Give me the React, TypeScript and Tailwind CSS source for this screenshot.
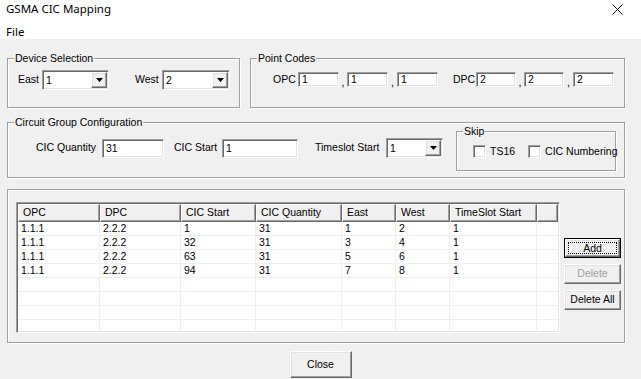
import React from "react";

const sunken =
  "border border-t-[#a0a0a0] border-l-[#a0a0a0] border-b-white border-r-white shadow-[inset_1px_1px_0_#696969,inset_-1px_-1px_0_#e3e3e3] bg-white";
const raised =
  "border border-t-white border-l-white border-b-[#696969] border-r-[#696969] shadow-[inset_-1px_-1px_0_#a0a0a0,inset_1px_1px_0_#e3e3e3] bg-[#f0f0f0]";
const headerCell =
  "border border-t-white border-l-white border-r-[#696969] border-b-[#696969] shadow-[inset_-1px_-1px_0_#a0a0a0] bg-[#f0f0f0]";

function Group({
  label,
  className,
  children,
}: {
  label?: string;
  className?: string;
  children?: React.ReactNode;
}) {
  return (
    <div
      className={`relative border border-[#a0a0a0] shadow-[inset_1px_1px_0_#fff,1px_1px_0_#fff] ${className ?? ""}`}
    >
      {label && (
        <span className="absolute -top-[7px] left-[6px] bg-[#f0f0f0] px-[1px] leading-[13px] whitespace-nowrap">
          {label}
        </span>
      )}
      {children}
    </div>
  );
}

function Arrow() {
  return (
    <svg width="7" height="4" viewBox="0 0 7 4">
      <polygon points="0,0 7,0 3.5,4" fill="#000" />
    </svg>
  );
}

function Combo({ value, className }: { value: string; className: string }) {
  return (
    <div className={`flex h-[20px] shrink-0 p-[1px] ${sunken} ${className}`}>
      <span className="flex-1 pl-[2px] leading-[16px]">{value}</span>
      <span className={`flex w-[16px] items-center justify-center ${raised}`}>
        <Arrow />
      </span>
    </div>
  );
}

function Field({ value, className }: { value: string; className: string }) {
  return (
    <div className={`shrink-0 pl-[3px] ${sunken} ${className}`}>{value}</div>
  );
}

function Check({ label, className }: { label: string; className?: string }) {
  return (
    <div className={`flex items-center whitespace-nowrap ${className ?? ""}`}>
      <span className={`h-[13px] w-[13px] shrink-0 ${sunken}`} />
      <span className="ml-[4px] leading-[13px]">{label}</span>
    </div>
  );
}

const cols = [
  { title: "OPC", w: "w-[82px]" },
  { title: "DPC", w: "w-[81px]" },
  { title: "CIC Start", w: "w-[75px]" },
  { title: "CIC Quantity", w: "w-[86px]" },
  { title: "East", w: "w-[54px]" },
  { title: "West", w: "w-[54px]" },
  { title: "TimeSlot Start", w: "w-[87px]" },
];

const rows = [
  ["1.1.1", "2.2.2", "1", "31", "1", "2", "1"],
  ["1.1.1", "2.2.2", "32", "31", "3", "4", "1"],
  ["1.1.1", "2.2.2", "63", "31", "5", "6", "1"],
  ["1.1.1", "2.2.2", "94", "31", "7", "8", "1"],
  ["", "", "", "", "", "", ""],
  ["", "", "", "", "", "", ""],
  ["", "", "", "", "", "", ""],
  ["", "", "", "", "", "", ""],
];

function Button({
  label,
  focused,
  disabled,
  className,
}: {
  label: string;
  focused?: boolean;
  disabled?: boolean;
  className?: string;
}) {
  if (focused) {
    return (
      <div className={`border border-black ${className ?? ""}`}>
        <div className={`flex h-full items-center justify-center p-[2px] ${raised}`}>
          <span className="flex h-full w-full items-center justify-center border border-dotted border-black leading-[12px]">
            {label}
          </span>
        </div>
      </div>
    );
  }
  return (
    <div
      className={`flex items-center justify-center ${raised} ${disabled ? "text-[#a0a0a0]" : ""} ${className ?? ""}`}
    >
      {label}
    </div>
  );
}

export default function App() {
  return (
    <div className="h-[379px] w-[641px] overflow-hidden bg-[#f0f0f0] font-['Liberation_Sans',Arial,sans-serif] text-[10.5px] text-black">
      <div className="h-[39px] bg-white">
        <div className="flex h-[19px] items-start justify-between pl-[6px] pr-[18px]">
          <span className="pt-[1px] font-['Noto_Sans',sans-serif] text-[11.5px] leading-[15px]">
            GSMA CIC Mapping
          </span>
          <svg width="11" height="11" viewBox="0 0 11 11" className="mt-[4px]">
            <path d="M0.5 0.5 L10.5 10.5 M10.5 0.5 L0.5 10.5" stroke="#111" strokeWidth="1" />
          </svg>
        </div>
        <div className="h-[20px] pl-[6px] pt-[6px] font-['Noto_Sans',sans-serif] text-[11.5px] leading-[13px]">
          File
        </div>
      </div>

      <div className="px-[7px] pt-[19px]">
        <div className="flex gap-[10px]">
          <Group label="Device Selection" className="h-[50px] w-[233px]">
            <div className="flex items-center pl-[10px] pt-[11px]">
              <span className="w-[24px]">East</span>
              <Combo value="1" className="w-[67px]" />
              <span className="ml-[26px] w-[27px]">West</span>
              <Combo value="2" className="w-[68px]" />
            </div>
          </Group>
          <Group label="Point Codes" className="h-[50px] w-[375px]">
            <div className="flex items-start pl-[22px] pt-[13px]">
              <span className="w-[25px] leading-[15px]">OPC</span>
              <Field value="1" className="h-[15px] w-[41px] leading-[12px]" />
              <span className="mt-[4px] w-[8px] text-center leading-[13px]">,</span>
              <Field value="1" className="h-[15px] w-[41px] leading-[12px]" />
              <span className="mt-[4px] w-[9px] text-center leading-[13px]">,</span>
              <Field value="1" className="h-[15px] w-[41px] leading-[12px]" />
              <span className="ml-[15px] w-[23px] leading-[15px]">DPC</span>
              <Field value="2" className="h-[15px] w-[40px] leading-[12px]" />
              <span className="mt-[4px] w-[8px] text-center leading-[13px]">,</span>
              <Field value="2" className="h-[15px] w-[40px] leading-[12px]" />
              <span className="mt-[4px] w-[9px] text-center leading-[13px]">,</span>
              <Field value="2" className="h-[15px] w-[41px] leading-[12px]" />
            </div>
          </Group>
        </div>

        <Group label="Circuit Group Configuration" className="mt-[14px] h-[56px] w-[618px]">
          <div className="flex items-start">
            <div className="mt-[15px] flex items-center pl-[28px]">
              <span className="w-[66px]">CIC Quantity</span>
              <Field value="31" className="h-[19px] w-[62px] leading-[16px]" />
              <span className="ml-[10px] w-[48px]">CIC Start</span>
              <Field value="1" className="h-[19px] w-[76px] leading-[16px]" />
              <span className="ml-[17px] w-[71px]">Timeslot Start</span>
              <Combo value="1" className="w-[57px]" />
            </div>
            <Group label="Skip" className="ml-[13px] mt-[8px] h-[40px] w-[160px]">
              <div className="flex items-center pl-[16px] pt-[13px]">
                <Check label="TS16" />
                <Check label="CIC Numbering" className="ml-[13px]" />
              </div>
            </Group>
          </div>
        </Group>

        <Group className="mt-[11px] h-[154px] w-[618px]">
          <div className="flex pl-[8px] pt-[12px]">
            <div className={`flex h-[131px] w-[544px] shrink-0 flex-col overflow-hidden p-[1px] ${sunken}`}>
              <div className="flex h-[18px] shrink-0">
                {cols.map((c) => (
                  <div key={c.title} className={`${c.w} shrink-0 pl-[4px] leading-[15px] ${headerCell}`}>
                    {c.title}
                  </div>
                ))}
                <div className={`flex-1 ${headerCell}`} />
              </div>
              {rows.map((r, i) => (
                <div key={i} className="flex h-[14px] shrink-0 border-b border-[#f0f0f0]">
                  {r.map((v, j) => (
                    <div key={j} className={`${cols[j].w} shrink-0 border-r border-[#f0f0f0] pl-[3px] leading-[13px]`}>
                      {v}
                    </div>
                  ))}
                </div>
              ))}
            </div>
            <div className="ml-[4px] mt-[36px] flex flex-col gap-[6px]">
              <Button label="Add" focused className="h-[20px] w-[57px]" />
              <Button label="Delete" disabled className="h-[20px] w-[57px]" />
              <Button label="Delete All" className="h-[20px] w-[57px]" />
            </div>
          </div>
        </Group>

        <div className="mt-[8px] flex justify-center">
          <Button label="Close" className="h-[27px] w-[62px]" />
        </div>
      </div>
    </div>
  );
}
